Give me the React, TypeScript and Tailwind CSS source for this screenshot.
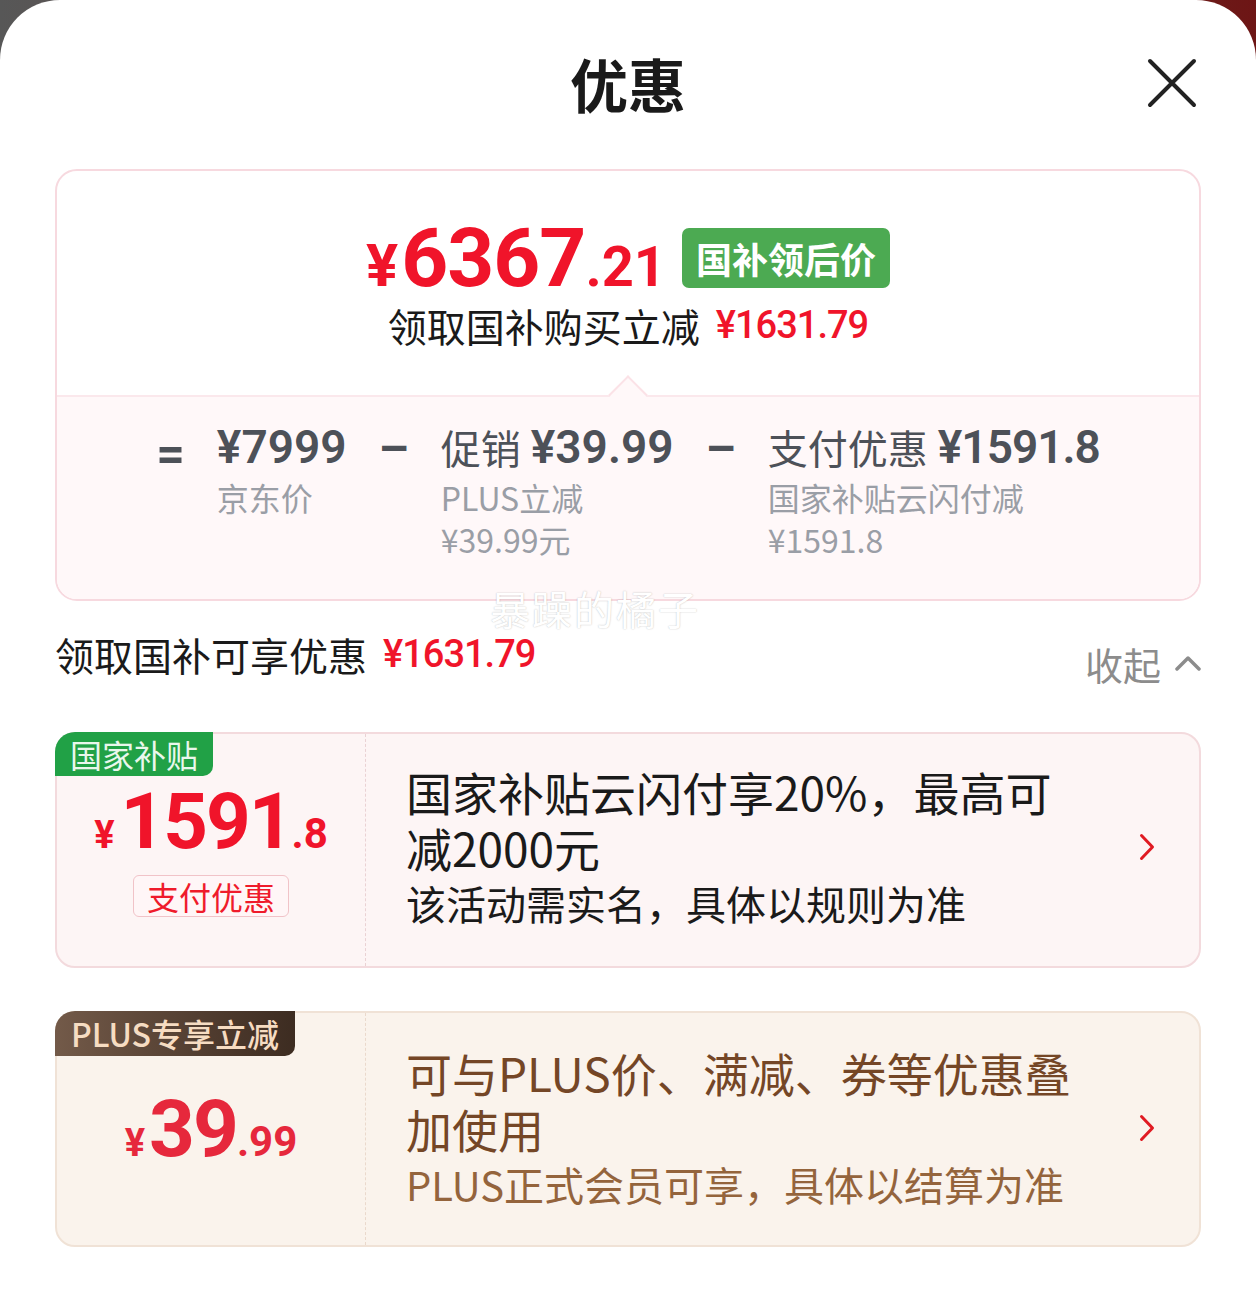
import React from "react";

const NUM = "font-['Roboto','Noto_Sans_CJK_SC',sans-serif]";

const ChevronRight = ({ className }: { className?: string }) => (
  <svg viewBox="0 0 16 28" className={className} fill="none" stroke="currentColor" strokeWidth={3} strokeLinecap="round" strokeLinejoin="round">
    <path d="M2.5 2.5L13.5 14L2.5 25.5" />
  </svg>
);

const Breakdown = () => (
  <div className="flex justify-center gap-[32px] pt-[25px] text-[#4d5158]">
    <span className={`${NUM} mt-[7px] h-[50px] text-[50px] leading-[50px] font-bold`}>=</span>
    <div>
      <div className={`${NUM} h-[50px] text-[46px] leading-[50px] font-semibold`}>¥7999</div>
      <div className="mt-[4px] text-[32px] leading-[42px] text-[#9a9ea6]">京东价</div>
    </div>
    <span className={`${NUM} mt-[2px] h-[50px] text-[48px] leading-[50px] font-bold`}>–</span>
    <div>
      <div className="flex h-[50px] items-center gap-[10px]">
        <span className="text-[40px]">促销</span>
        <span className={`${NUM} text-[46px] font-semibold`}>¥39.99</span>
      </div>
      <div className="mt-[4px] text-[32px] leading-[42px] text-[#9a9ea6]">
        <div>PLUS立减</div>
        <div>¥39.99元</div>
      </div>
    </div>
    <span className={`${NUM} mt-[2px] h-[50px] text-[48px] leading-[50px] font-bold`}>–</span>
    <div>
      <div className="flex h-[50px] items-center gap-[10px]">
        <span className="text-[40px]">支付优惠</span>
        <span className={`${NUM} text-[46px] font-semibold tracking-[-1px]`}>¥1591.8</span>
      </div>
      <div className="mt-[4px] text-[32px] leading-[42px] text-[#9a9ea6]">
        <div>国家补贴云闪付减</div>
        <div>¥1591.8</div>
      </div>
    </div>
  </div>
);

export default function App() {
  return (
    <div className="min-h-[1301px] bg-gradient-to-r from-[#575757] to-[#6d1515] font-['Noto_Sans_CJK_SC',sans-serif]">
      <div className="relative min-h-[1301px] rounded-t-[60px] bg-white px-[55px]">
        {/* header */}
        <div className="relative flex h-[169px] items-center justify-center pb-[3px]">
          <h1 className="text-[58px] font-bold leading-none text-[#1a1a1a]">优惠</h1>
          <button type="button" className="absolute right-[4px] top-[58px] h-[50px] w-[50px] text-[#222]">
            <svg viewBox="0 0 50 50" className="h-full w-full" stroke="currentColor" strokeWidth={4} strokeLinecap="round">
              <path d="M3 3L47 47M47 3L3 47" />
            </svg>
          </button>
        </div>

        {/* price summary */}
        <div className="rounded-[22px] border-2 border-[#f7d9df]">
          <div className="relative flex h-[224px] flex-col items-center">
            <div className="mt-[46px] flex h-[82px] items-center">
              <div className={`${NUM} flex items-baseline font-bold text-[#f0142a]`}>
                <span className="text-[60px] leading-none">¥</span>
                <span className="ml-[3px] text-[82px] leading-none tracking-[-1px]">6367</span>
                <span className="text-[56px] leading-none">.21</span>
              </div>
              <span className="ml-[16px] rounded-[7px] bg-[#4caa52] px-[14px] text-[36px] font-bold leading-[60px] text-white">国补领后价</span>
            </div>
            <div className="mt-[6px] flex h-[40px] items-center">
              <span className="text-[39px] text-[#1a1a1a]">领取国补购买立减</span>
              <span className={`${NUM} ml-[16px] text-[38px] font-medium tracking-[-1px] text-[#f0142a]`}>¥1631.79</span>
            </div>
            <div className="absolute bottom-[-14px] left-1/2 h-[28px] w-[28px] -translate-x-1/2 rotate-45 border-l-2 border-t-2 border-[#fbe2e7] bg-[#fff8f9]" />
          </div>
          <div className="h-[204px] rounded-b-[20px] border-t-2 border-[#fbe8ec] bg-[#fff8f9]">
            <Breakdown />
          </div>
        </div>

        <span className="pointer-events-none absolute left-[490px] top-[578px] text-[40px] tracking-[2px] text-white [text-shadow:0_0_1.5px_rgba(0,0,0,0.28)]">暴躁的橘子</span>

        {/* total */}
        <div className="mt-[31px] flex items-start justify-between">
          <div className="flex h-[44px] items-center">
            <span className="text-[39px] text-[#1a1a1a]">领取国补可享优惠</span>
            <span className={`${NUM} ml-[16px] text-[38px] font-medium tracking-[-1px] text-[#f0142a]`}>¥1631.79</span>
          </div>
          <div className="mt-[9px] flex h-[44px] items-center gap-[14px] text-[#8c8c8c]">
            <span className="text-[38px]">收起</span>
            <svg viewBox="0 0 26 16" className="h-[16px] w-[26px]" fill="none" stroke="currentColor" strokeWidth={3.5} strokeLinecap="round" strokeLinejoin="round">
              <path d="M2 14L13 3L24 14" />
            </svg>
          </div>
        </div>

        {/* subsidy card */}
        <div className="relative mt-[47px] flex h-[236px] rounded-[20px] border-2 border-[#f3dadd] bg-[#fdf5f5]">
          <span className="absolute left-[-2px] top-[-2px] rounded-br-[10px] rounded-tl-[20px] bg-[#21a146] px-[15px] text-[32px] leading-[44px] text-[#e9f7ec]">国家补贴</span>
          <div className="flex w-[309px] flex-col items-center justify-center border-r border-dashed border-[#ead2d4]">
            <div className={`${NUM} flex h-[80px] items-baseline font-bold text-[#f0142a]`}>
              <span className="text-[38px] leading-none">¥</span>
              <span className="ml-[6px] text-[78px] leading-none tracking-[-2px]">1591</span>
              <span className="text-[42px] leading-none">.8</span>
            </div>
            <span className="mt-[12px] rounded-[6px] border border-[#f1c3c8] bg-[#fff6f7] px-[13px] text-[32px] leading-[40px] text-[#ef1b2b]">支付优惠</span>
          </div>
          <div className="flex flex-1 items-center justify-between pb-[6px] pl-[40px] pr-[44px]">
            <div className="w-[686px] text-[#1a1a1a]">
              <div className="text-[46px] leading-[56px]">国家补贴云闪付享20%，最高可减2000元</div>
              <div className="text-[40px] leading-[56px]">该活动需实名，具体以规则为准</div>
            </div>
            <ChevronRight className="h-[28px] w-[16px] text-[#e01a22]" />
          </div>
        </div>

        {/* plus card */}
        <div className="relative mt-[43px] flex h-[236px] rounded-[20px] border-2 border-[#f0e2d6] bg-[#faf3ec]">
          <span className="absolute left-[-2px] top-[-2px] rounded-br-[10px] rounded-tl-[20px] bg-gradient-to-r from-[#735a49] to-[#3d2c21] px-[16px] text-[32px] font-medium leading-[45px] text-[#f6dcc2]">PLUS专享立减</span>
          <div className="flex w-[309px] flex-col items-center justify-center border-r border-dashed border-[#ead9cc]">
            <div className={`${NUM} flex items-baseline font-bold text-[#e6283c]`}>
              <span className="text-[38px] leading-none">¥</span>
              <span className="ml-[4px] text-[80px] leading-none tracking-[-2px]">39</span>
              <span className="text-[42px] leading-none">.99</span>
            </div>
          </div>
          <div className="flex flex-1 items-center justify-between pb-[2px] pl-[40px] pr-[44px]">
            <div className="w-[686px]">
              <div className="text-[46px] leading-[56px] text-[#744626]">可与PLUS价、满减、券等优惠叠加使用</div>
              <div className="text-[40px] leading-[56px] text-[#94643c]">PLUS正式会员可享，具体以结算为准</div>
            </div>
            <ChevronRight className="h-[28px] w-[16px] text-[#e01a22]" />
          </div>
        </div>
      </div>
    </div>
  );
}
